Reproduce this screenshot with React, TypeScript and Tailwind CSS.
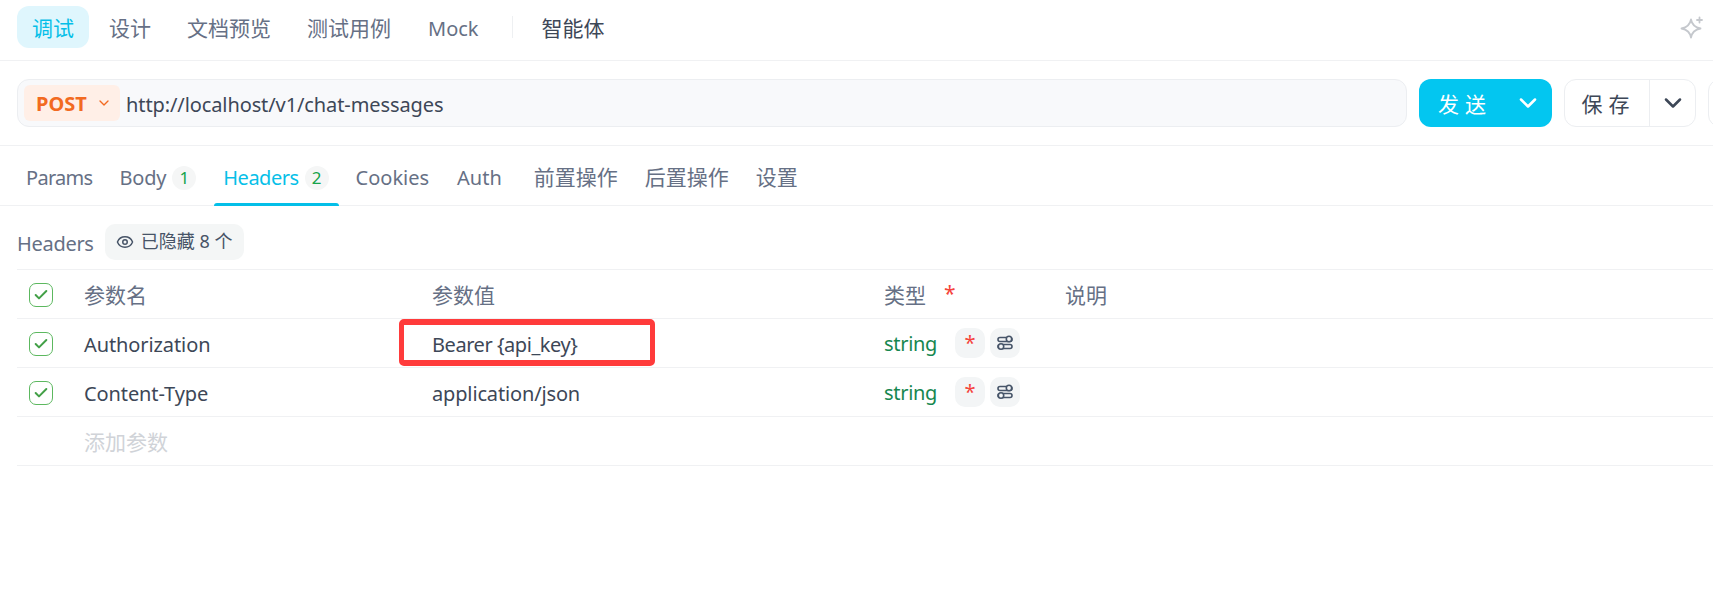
import { Check, ChevronDown, Eye } from "lucide-react";

const topTabs = ["设计", "文档预览", "测试用例"];

const rows = [
  { name: "Authorization", value: "Bearer {api_key}", valueClass: "tracking-[-0.45px]" },
  { name: "Content-Type", value: "application/json", valueClass: "tracking-[-0.15px]" },
];

function CheckBox() {
  return (
    <div className="w-6 h-6 mt-[2px] rounded-[7px] border border-[#5cb85f] flex items-center justify-center">
      <Check className="w-4 h-4 text-[#43a047]" strokeWidth={3} />
    </div>
  );
}

function ToggleIcon() {
  return (
    <svg width="18" height="18" viewBox="0 0 18 18" fill="none" stroke="#475569" strokeWidth="1.6">
      <rect x="2" y="3.5" width="14" height="4" rx="2" />
      <circle cx="13" cy="5" r="2.700" fill="#f3f5f6" />
      <rect x="2" y="10.500" width="14" height="4" rx="2" />
      <circle cx="5" cy="12.500" r="2.700" fill="#f3f5f6" />
    </svg>
  );
}

function Count({ n }: { n: number }) {
  return (
    <span className="w-6 h-6 mt-[4px] rounded-full bg-[#f5f6f6] text-[#16a34a] text-[17px] flex items-center justify-center">
      {n}
    </span>
  );
}

export default function App() {
  return (
    <div
      className="h-[615px] w-[1713px] overflow-hidden bg-white text-[20px] text-[#667085]"
      style={{ fontFamily: '"Noto Sans", "Noto Sans CJK SC", sans-serif' }}
    >
      {/* top tabs */}
      <div className="h-[61px] border-b border-[#f0f1f3] pl-[17px] pr-[10px] pt-[6px] flex items-start">
        <div className="h-[42px] w-[72px] rounded-[12px] bg-[#dff6fd] text-[#06bfe8] text-[21px] pt-[3px] flex items-center justify-center">
          调试
        </div>
        <div className="h-[42px] flex items-center gap-[36px] ml-[20px] pt-[3px]">
          {topTabs.map((t) => (
            <span key={t} className="text-[21px]">{t}</span>
          ))}
          <span className="ml-px">Mock</span>
        </div>
        <div className="h-[42px] flex items-center ml-[33px]">
          <div className="h-[22px] w-px bg-[#eef0f2]" />
          <span className="ml-[29px] pt-[3px] text-[21px] text-[#3d4757]">智能体</span>
        </div>
        <svg className="ml-auto mt-[10px] mr-[-1px]" width="24" height="24" viewBox="0 0 24 24" fill="none" stroke="#c5c8cd" strokeWidth="1.8" strokeLinejoin="round">
          <path d="M11 3.500c.9 5.200 3.300 7.700 9.500 9-6.200 1.300-8.600 3.800-9.500 9-.9-5.200-3.300-7.700-9.500-9 6.200-1.300 8.600-3.800 9.500-9z" />
          <path d="M19.500 1.500v5M17 4h5" strokeLinecap="round" />
        </svg>
      </div>

      {/* url row */}
      <div className="h-[85px] border-b border-[#f0f1f3] pl-[17px] pt-[18px] flex items-start">
        <div className="h-12 w-[1390px] shrink-0 rounded-[12px] border border-[#eceef1] bg-[#f8f9fb] flex items-center pl-[6px]">
          <div className="h-9 w-[96px] rounded-[6px] bg-[#ffefe7] flex items-center pl-[12px] text-[#f26a21] font-bold">
            <span className="pt-[2px]">POST</span>
            <ChevronDown className="w-4 h-4 ml-[9px]" strokeWidth={2} />
          </div>
          <span className="ml-[6px] pt-[3px] text-[#3d4757] tracking-[-0.1px]">http://localhost/v1/chat-messages</span>
        </div>
        <div className="h-12 w-[133px] ml-[12px] rounded-[12px] bg-[#03c6f0] text-white flex items-center pl-[19px] shrink-0">
          <span className="text-[21px] tracking-[6px] pt-[3px]">发送</span>
          <ChevronDown className="w-7 h-7 ml-[22px]" strokeWidth={2.2} />
        </div>
        <div className="h-12 w-[132px] ml-[12px] rounded-[12px] border border-[#eceef1] flex items-center shrink-0 text-[#3d4757]">
          <span className="w-[85px] h-full border-r border-[#eceef1] pt-[3px] text-[21px] pl-[3px] flex items-center justify-center tracking-[6px]">保存</span>
          <span className="flex-1 flex items-center justify-center">
            <ChevronDown className="w-7 h-7" strokeWidth={2.2} />
          </span>
        </div>
        <div className="h-12 w-[40px] ml-[12px] rounded-[12px] border border-[#eceef1] shrink-0" />
      </div>

      {/* request tabs */}
      <div className="h-[60px] border-b border-[#f0f1f3] pl-[26px] flex items-stretch">
        <span className="flex items-center pt-[5px] tracking-[-0.7px]">Params</span>
        <span className="flex items-center ml-[27px] gap-[6px]">
          <span className="pt-[5px] tracking-[-0.2px]">Body</span> <Count n={1} />
        </span>
        <span className="relative flex items-center ml-[27px] gap-[6px] text-[#06bfe8]">
          <span className="pt-[5px] tracking-[-0.5px]">Headers</span> <Count n={2} />
          <span className="absolute -left-[9px] -right-[10px] bottom-[-1px] h-[3px] rounded-t bg-[#03bfe8]" />
        </span>
        <span className="flex items-center ml-[27px] pt-[5px]">Cookies</span>
        <span className="flex items-center ml-[28px] pt-[5px]">Auth</span>
        <span className="flex items-center ml-[32px] pt-[5px] text-[21px]">前置操作</span>
        <span className="flex items-center ml-[27px] pt-[5px] text-[21px]">后置操作</span>
        <span className="flex items-center ml-[27px] pt-[5px] text-[21px]">设置</span>
      </div>

      {/* headers section */}
      <div className="pl-[17px]">
        <div className="h-[63px] flex items-center pt-[8px]">
          <span className="pt-[4px] tracking-[-0.3px]">Headers</span>
          <div className="h-9 w-[139px] ml-[11px] rounded-[10px] bg-[#f4f6f6] text-[#475467] text-[18px] flex items-center justify-center gap-[7px]">
            <Eye className="w-[18px] h-[18px]" strokeWidth={2} />
            已隐藏 8 个
          </div>
        </div>

        <div className="relative border-t border-[#f0f1f3]">
          <div className="grid grid-cols-[67px_348px_452px_181px_1fr] h-[49px] items-center border-b border-[#f0f1f3]">
            <div className="pl-[12px]">
              <CheckBox />
            </div>
            <span className="text-[21px] pt-[3px]">参数名</span>
            <span className="text-[21px] pt-[3px]">参数值</span>
            <span className="text-[21px] pt-[3px] flex items-start">
              类型
              <span className="text-[#f5443c] ml-[18px] -mt-[2px]">*</span>
            </span>
            <span className="text-[21px] pt-[3px]">说明</span>
          </div>

          {rows.map((r) => (
            <div key={r.name} className="grid grid-cols-[67px_348px_452px_181px_1fr] h-[49px] items-center border-b border-[#f0f1f3] text-[#3d4757]">
              <div className="pl-[12px]">
                <CheckBox />
              </div>
              <span className="pt-[3px] tracking-[-0.1px]">{r.name}</span>
              <span className={`pt-[3px] ${r.valueClass}`}>{r.value}</span>
              <div className="flex items-center">
                <span className="text-[#16874f] w-[71px] pt-[2px] tracking-[-0.3px]">string</span>
                <span className="w-[30px] h-[30px] rounded-[10px] bg-[#f3f5f6] text-[#f5443c] flex items-center justify-center">*</span>
                <span className="w-[30px] h-[30px] ml-[5px] rounded-[10px] bg-[#f3f5f6] flex items-center justify-center">
                  <ToggleIcon />
                </span>
              </div>
              <span />
            </div>
          ))}

          <div className="grid grid-cols-[67px_1fr] h-[49px] items-center border-b border-[#f0f1f3] text-[#d0d3d8] text-[21px]">
            <span />
            <span className="pt-[3px]">添加参数</span>
          </div>

          {/* red annotation box */}
          <div className="absolute left-[382px] top-[49px] w-[256px] h-[47px] rounded-[5px] border-x-[5px] border-y-[6px] border-[#ff3b3b]" />
        </div>
      </div>
    </div>
  );
}
